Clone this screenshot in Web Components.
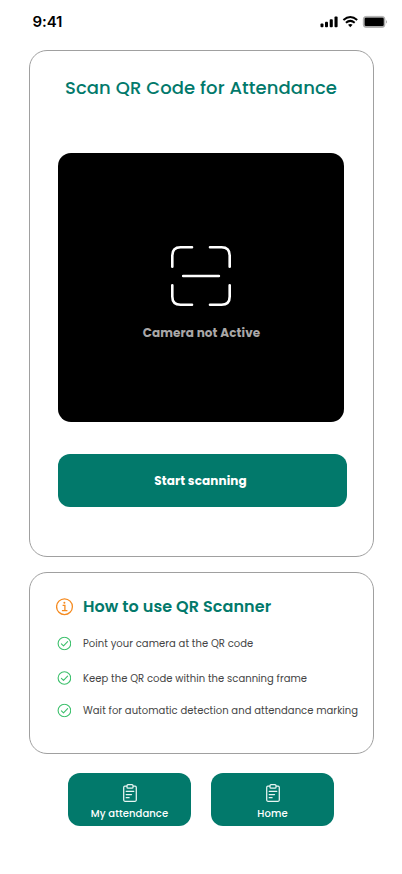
<!DOCTYPE html>
<html lang="en">
<head>
<meta charset="utf-8">
<title>Scan QR Code for Attendance</title>
<style>
html,body{margin:0;background:#fff}
body{width:402px;height:874px;overflow:hidden;font-family:Poppins,Inter,"Open Sans",sans-serif}
</style>
</head>
<body>
<attendance-app></attendance-app>
<script>
const define = (name, html) => customElements.define(name, class extends HTMLElement {
  connectedCallback() {
    if (this.shadowRoot) return;
    this.attachShadow({mode: "open"}).innerHTML = html;
  }
});

define("text-line", `<style>
:host{display:block;white-space:nowrap;line-height:20px}
</style><slot></slot>`);

define("status-bar", `<style>
:host{display:flex;justify-content:space-between;align-items:center;height:44px;padding:0 15px 0 32.500px;box-sizing:border-box}
text-line{font:600 15px/20px Inter,sans-serif;letter-spacing:-.1px}
svg{display:block}
</style>
<text-line>9:41</text-line>
<svg width="67" height="14" viewBox="320 15 67 14">
 <g fill="#000"><rect x="320.5" y="23.6" width="3" height="3.6" rx=".9"/><rect x="325" y="21.7" width="3" height="5.5" rx=".9"/><rect x="329.7" y="19.2" width="3.1" height="8" rx=".9"/><rect x="334.5" y="16.6" width="3.1" height="10.6" rx=".9"/></g>
 <g fill="none" stroke="#000" stroke-width="2"><path d="M343.4 19.9Q350.3 14.2 357.2 19.9"/><path d="M345.9 22.7Q350.3 19.1 354.7 22.7"/></g>
 <path d="M348 24.7Q350.3 23.1 352.6 24.7L350.3 27.2Z"/>
 <rect x="363.300" y="16.400" width="21.600" height="11" rx="2.600" fill="#a9a9a9" stroke="#a9a9a9" stroke-width=".8"/>
 <rect x="364.7" y="17.8" width="19" height="8.3" rx="1.3"/>
 <path d="M386 20.3q1 .4 1 1.6t-1 1.6z" fill="#aaa"/>
</svg>`);

define("outline-card", `<style>
:host{display:flex;flex-direction:column;box-sizing:border-box;width:345px;border:1px solid #a0a0a0;border-radius:18px;background:#fff}
</style><slot></slot>`);

define("camera-view", `<style>
:host{display:flex;flex-direction:column;align-items:center;box-sizing:border-box;width:286px;height:269px;padding-top:92px;border-radius:13px;background:#000;color:#a9a7a7}
svg{display:block}
text-line{margin:16px 0 0 1px;font-weight:700;font-size:12px;letter-spacing:.1px}
</style>
<svg width="62" height="62" viewBox="170 245 62 62" fill="none" stroke="#fff" stroke-width="2.6" stroke-linecap="round"><path d="M192 247.3h-11.5q-8.2 0-8.2 8.2v11.3M210 247.3h11.5q8.2 0 8.2 8.2v11.3M172.300 285.300v11.300q0 8.200 8.200 8.200h11.500M229.700 285.300v11.300q0 8.200-8.200 8.200h-11.500M183.200 276h35.700"/></svg>
<text-line><slot></slot></text-line>`);

define("primary-button", `<style>
:host{display:block}
button{all:unset;display:flex;align-items:center;justify-content:center;width:289px;height:53px;padding-right:4px;border-radius:12px;background:#02796b;color:#fff;font-weight:700;font-size:12px;letter-spacing:.12px;box-sizing:border-box}
</style><button><slot></slot></button>`);

define("info-icon", `<style>:host,svg{display:block}</style>
<svg width="18" height="18" viewBox="0 0 18 18" fill="none" stroke="#f58a1f" stroke-width="1.3"><circle cx="8.500" cy="8.700" r="7.900"/><path d="M6.600 7.400h2.300v5M5.900 12.600h5.500" stroke-width="1.300"/><circle cx="8.400" cy="4.700" r="1" fill="#f58a1f" stroke="none"/></svg>`);

define("check-item", `<style>
:host{display:flex;align-items:center;height:20px;gap:12px;color:#444;font-size:10px;letter-spacing:.05px}
svg{display:block;flex:none;transform:translateY(-.5px)}
:host([low]) svg{transform:translateY(-1px)}
</style>
<svg width="14" height="14" viewBox="0 0 14 14" fill="none" stroke="#3cc06c" stroke-width="1.100" stroke-linecap="round" stroke-linejoin="round"><circle cx="7.400" cy="7" r="6.300"/><path d="M4.400 7.300l2.100 2.100 4.100-4.200"/></svg><slot></slot>`);

define("nav-button", `<style>
:host{display:block}
button{all:unset;display:flex;flex-direction:column;align-items:center;box-sizing:border-box;width:123px;height:53px;padding-top:11px;border-radius:12px;background:#02796b;color:#fff;font-weight:500;font-size:10px;letter-spacing:.08px}
svg{display:block;margin-bottom:1px}
</style><button>
<svg width="16" height="19" viewBox="0 0 16 19" fill="none" stroke="#e9f6f3" stroke-width="1.250" stroke-linejoin="round"><path d="M5 2.200H2.900Q1.700 2.200 1.700 3.400V16.100Q1.700 17.300 2.900 17.300H13.100Q14.300 17.300 14.300 16.100V3.400Q14.300 2.200 13.100 2.200H11"/><rect x="5" y=".7" width="6" height="3.500" rx="1"/><path d="M4.200 7.300h7.600M4.200 10.500h5.300M4.200 13.700h2.900" stroke-linecap="round"/></svg>
<slot></slot></button>`);

define("attendance-app", `<style>
:host{display:block}
.scan{height:507px;margin:6px 0 0 29px;padding-left:28px}
.title{align-self:center;margin:27px 29px 0 0;color:#02796b;font-weight:500;font-size:18px;letter-spacing:.09px}
camera-view{margin-top:55px}
primary-button{margin-top:32px}
.help{height:182px;margin:15px 0 0 29px;padding:24px 0 0 26px}
.head{display:flex;align-items:center;gap:9px;height:20px;color:#02796b;font-weight:600;font-size:16px;letter-spacing:.08px}
check-item{margin-left:1px}
nav{display:flex;gap:20px;margin:19px 0 0 68px}
</style>
<status-bar></status-bar>
<outline-card class="scan">
 <text-line class="title">Scan QR Code for Attendance</text-line>
 <camera-view>Camera not Active</camera-view>
 <primary-button><text-line>Start scanning</text-line></primary-button>
</outline-card>
<outline-card class="help">
 <div class="head"><info-icon></info-icon><text-line>How to use QR Scanner</text-line></div>
 <check-item style="margin-top:17px"><text-line>Point your camera at the QR code</text-line></check-item>
 <check-item low style="margin-top:15px"><text-line>Keep the QR code within the scanning frame</text-line></check-item>
 <check-item style="margin-top:12px"><text-line>Wait for automatic detection and attendance marking</text-line></check-item>
</outline-card>
<nav>
 <nav-button><text-line>My attendance</text-line></nav-button>
 <nav-button><text-line>Home</text-line></nav-button>
</nav>`);
</script>
</body>
</html>
